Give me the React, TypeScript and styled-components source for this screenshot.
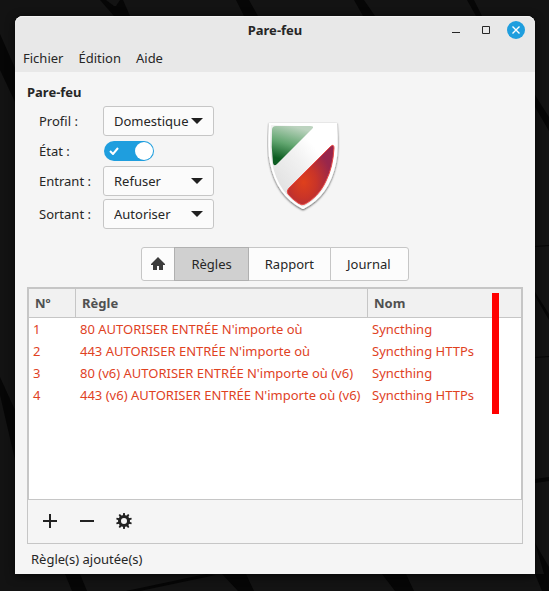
import React from 'react';
import styled, { createGlobalStyle, css } from 'styled-components';

const Global = createGlobalStyle`
  *, *::before, *::after { box-sizing: border-box; }
  html, body { margin: 0; }
  body, button, select, input, table {
    font-family: "Noto Sans", "Open Sans", sans-serif;
    font-size: 13px;
    line-height: 20px;
    color: #262626;
  }
`;

const Desktop = styled.div`
  position: relative;
  min-height: 100vh;
  padding: 16px 14px 17px 15px;
  display: flex;
  background: #131313;
  overflow: hidden;
`;

const Wallpaper = styled.svg`
  position: absolute;
  inset: 0;
  width: 100%;
  height: 100%;
`;

const Window = styled.main`
  position: relative;
  flex: 1;
  min-width: 0;
  display: flex;
  flex-direction: column;
  background: #f5f5f5;
  border-radius: 8px 8px 0 0;
  box-shadow: 0 2px 10px rgba(0, 0, 0, 0.7);
`;

const TitleBar = styled.header`
  display: grid;
  grid-template-columns: 1fr auto 1fr;
  align-items: center;
  height: 28px;
  padding: 0 10px;
  background: #e8e8e8;
  border-radius: 8px 8px 0 0;
  box-shadow: inset 0 1px #f4f4f4;
`;

const Title = styled.h1`
  grid-column: 2;
  margin: 0;
  font-size: 13px;
  font-weight: 700;
`;

const WindowControls = styled.div`
  display: flex;
  justify-content: flex-end;
  gap: 12px;
`;

const WindowButton = styled.button<{ $accent?: boolean }>`
  display: grid;
  place-items: center;
  width: 18px;
  height: 18px;
  padding: 0;
  border: 0;
  border-radius: 50%;
  background: ${(p) => (p.$accent ? '#1f9ede' : 'transparent')};
  color: ${(p) => (p.$accent ? '#fff' : '#262626')};
`;

const MenuBar = styled.nav`
  display: flex;
  gap: 15px;
  height: 28px;
  padding: 0 8px;
  background: #e8e8e8;
`;

const MenuItem = styled.button`
  padding: 0;
  border: 0;
  background: none;
`;

const Content = styled.div`
  flex: 1;
  display: flex;
  flex-direction: column;
  padding: 10px 12px 5px;
`;

const Overview = styled.section`
  display: flex;
  align-items: flex-start;
`;

const Heading = styled.h2`
  margin: 0 0 4px;
  font-size: 13px;
  font-weight: 700;
`;

const Form = styled.div`
  display: grid;
  grid-template-columns: 64px 111px;
  grid-template-rows: 30px 24px 30px 30px;
  row-gap: 3px;
  align-items: center;
  padding-left: 12px;
`;

const Label = styled.label`
  white-space: nowrap;
`;

const SelectBox = styled.div`
  display: grid;
  align-items: center;
  height: 30px;
`;

const Select = styled.select`
  grid-area: 1 / 1;
  appearance: none;
  width: 100%;
  height: 100%;
  padding: 0 16px 0 10px;
  border: 1px solid #c6c6c6;
  border-radius: 3px;
  background: #fbfbfb;
`;

const Arrow = styled.svg`
  grid-area: 1 / 1;
  justify-self: end;
  margin-right: 11px;
  pointer-events: none;
`;

const SwitchTrack = styled.span`
  display: grid;
  align-items: center;
  width: 50px;
  height: 20px;
  margin-left: 1px;
  border-radius: 10px;
  background: #1f9ede;
`;

const SwitchInput = styled.input`
  grid-area: 1 / 1;
  appearance: none;
  width: 18px;
  height: 18px;
  margin: 0 1px;
  border-radius: 50%;
  background: #fff;
  justify-self: start;
  &:checked { justify-self: end; }
`;

const SwitchCheck = styled.svg`
  grid-area: 1 / 1;
  margin-left: 5px;
`;

const ShieldBox = styled.div`
  display: flex;
  padding: 39px 0 0 53px;
`;

const Tabs = styled.div`
  display: flex;
  align-self: center;
  height: 34px;
  margin-top: 18px;
`;

const Tab = styled.button<{ $active?: boolean }>`
  display: flex;
  align-items: center;
  padding: 0 16px;
  border: 1px solid #c6c6c6;
  background: #fcfcfc;
  & + & { margin-left: -1px; }
  &:first-child { padding: 0 8px; border-radius: 3px 0 0 3px; }
  &:last-child { padding: 0 17px 0 16px; border-radius: 0 3px 3px 0; }
  ${(p) => p.$active && css`z-index: 1; background: #d0d0d0; border-color: #b0b0b0;`}
`;

const Panel = styled.section`
  position: relative;
  flex: 1;
  display: flex;
  flex-direction: column;
  margin-top: 6px;
  border: 1px solid #c6c6c6;
`;

const List = styled.div`
  flex: 1;
  border: 1px solid #c6c6c6;
  background: #fff;
`;

const Table = styled.table`
  width: 100%;
  table-layout: fixed;
  border-spacing: 0;
`;

const HeadCell = styled.th<{ $width?: number }>`
  width: ${(p) => (p.$width ? `${p.$width}px` : 'auto')};
  height: 29px;
  padding: 0 6px;
  border-bottom: 1px solid #c6c6c6;
  background: #f1f1f1;
  color: #505050;
  text-align: left;
  &:not(:last-child) { border-right: 1px solid #c6c6c6; }
`;

const Cell = styled.td`
  height: 22px;
  padding: 0 4px;
  color: #e0421f;
  white-space: nowrap;
`;

const Marker = styled.span`
  position: absolute;
  top: 5px;
  right: 23px;
  width: 7px;
  height: 121px;
  background: #f00;
`;

const Toolbar = styled.div`
  display: flex;
  align-items: flex-start;
  gap: 21px;
  height: 43px;
  padding: 13px 14px 0;
`;

const ToolButton = styled.button`
  display: grid;
  padding: 0;
  border: 0;
  background: none;
`;

const Status = styled.footer`
  padding: 5px 4px 0;
`;

const rules = [
  ['1', "80 AUTORISER ENTRÉE N'importe où", 'Syncthing'],
  ['2', "443 AUTORISER ENTRÉE N'importe où", 'Syncthing HTTPs'],
  ['3', "80 (v6) AUTORISER ENTRÉE N'importe où (v6)", 'Syncthing'],
  ['4', "443 (v6) AUTORISER ENTRÉE N'importe où (v6)", 'Syncthing HTTPs'],
];

function Dropdown({ id, label, options }: { id: string; label: string; options: string[] }) {
  return (
    <>
      <Label htmlFor={id}>{label}</Label>
      <SelectBox>
        <Select id={id}>
          {options.map((o) => <option key={o}>{o}</option>)}
        </Select>
        <Arrow width="12" height="6" viewBox="0 0 12 6"><path d="M0 0h12L6 6z" fill="#202020" /></Arrow>
      </SelectBox>
    </>
  );
}

const shieldPath = 'M3 3H69Q71 28 68 42C64 62 54 78 36 87C18 78 8 62 4 42Q1 28 3 3Z';

function Shield() {
  return (
    <svg width="74" height="94" viewBox="0 0 74 94" role="img" aria-label="Pare-feu">
      <defs>
        <linearGradient id="body" x1="0" y1="1" x2="1" y2="0">
          <stop offset="0.2" stopColor="#e2e2e2" />
          <stop offset="0.5" stopColor="#f1f1f1" />
          <stop offset="0.7" stopColor="#fff" />
        </linearGradient>
        <linearGradient id="green" x1="0.5" y1="0" x2="0.2" y2="1">
          <stop offset="0" stopColor="#bcd3bf" />
          <stop offset="0.45" stopColor="#62a670" />
          <stop offset="0.85" stopColor="#0d5d22" />
        </linearGradient>
        <radialGradient id="red" cx="0.35" cy="0.62" r="0.6">
          <stop offset="0" stopColor="#df401c" />
          <stop offset="0.45" stopColor="#c93428" />
          <stop offset="1" stopColor="#98264b" />
        </radialGradient>
        <filter id="shade" x="-20%" y="-20%" width="140%" height="140%">
          <feDropShadow dx="0" dy="1" stdDeviation="1" floodColor="#000" floodOpacity="0.7" />
        </filter>
      </defs>
      <path d={shieldPath} fill="url(#body)" stroke="#fff" strokeWidth="2" filter="url(#shade)" />
      <path d="M9 5H43Q48 5 45 8L10 43Q7 46 6 42Q4 26 5 9Q5 5 9 5Z" fill="url(#green)" />
      <path d="M63 26Q67 22 67 27Q66 46 59 60C54 71 46 79 38 83Q35 85 31 82Q25 78 21 73Q19 70 22 67Z" fill="url(#red)" stroke="#e84a45" strokeWidth="1" />
    </svg>
  );
}

const gearTeeth = [0, 36, 72, 108, 144, 180, 216, 252, 288, 324];

export default function App() {
  return (
    <Desktop>
      <Global />
      <Wallpaper viewBox="0 0 549 591" preserveAspectRatio="none" aria-hidden="true">
        <g fill="#060606">
          <path d="M100 0h6l8 6h2l4-6h3l7 16h-16z" />
          <path d="M236 0h13l9 16h-14zM354 0h10l11 16h-12zM467 0h7l8 16h-6z" />
          <path d="M0 34L15 68V102L0 70zM0 377l15 33v50L0 395z" />
          <path d="M535 95l14 22v14l-14-24zM535 292l14 22v6l-14-24zM535 543l14 24v24z" />
          <path d="M535 479l14-2v4l-14 2zM535 246l14-1v1l-14 1zM535 357l14-1v1l-14 1z" />
          <path d="M65 574h15l7 17H72zM222 574h24l8 17h-16zM382 574h24l8 17h-19zM535 574h10l4 17h-7z" />
          <path d="M206 574l-80 17h14l76-16z" />
        </g>
      </Wallpaper>
      <Window>
        <TitleBar>
          <Title>Pare-feu</Title>
          <WindowControls>
            <WindowButton aria-label="Réduire">
              <svg width="10" height="10"><path d="M1 7.5h8" stroke="currentColor" /></svg>
            </WindowButton>
            <WindowButton aria-label="Agrandir">
              <svg width="8" height="8"><path d="M.5.5h7v7h-7z" fill="none" stroke="currentColor" /></svg>
            </WindowButton>
            <WindowButton $accent aria-label="Fermer">
              <svg width="8" height="8"><path d="M.5.5l7 7m0-7l-7 7" stroke="currentColor" strokeWidth="1.4" /></svg>
            </WindowButton>
          </WindowControls>
        </TitleBar>
        <MenuBar>
          <MenuItem>Fichier</MenuItem>
          <MenuItem>Édition</MenuItem>
          <MenuItem>Aide</MenuItem>
        </MenuBar>
        <Content>
          <Overview>
            <div>
              <Heading>Pare-feu</Heading>
              <Form>
                <Dropdown id="profil" label="Profil :" options={['Domestique', 'Public', 'Bureau']} />
                <Label htmlFor="etat">État :</Label>
                <SwitchTrack>
                  <SwitchCheck width="10" height="8" viewBox="0 0 10 8">
                    <path d="M1 4l3 3 5-6" fill="none" stroke="#fff" strokeWidth="2" />
                  </SwitchCheck>
                  <SwitchInput id="etat" type="checkbox" role="switch" defaultChecked />
                </SwitchTrack>
                <Dropdown id="entrant" label="Entrant :" options={['Refuser', 'Rejeter', 'Autoriser']} />
                <Dropdown id="sortant" label="Sortant :" options={['Autoriser', 'Rejeter', 'Refuser']} />
              </Form>
            </div>
            <ShieldBox><Shield /></ShieldBox>
          </Overview>
          <Tabs role="tablist">
            <Tab role="tab" aria-label="Accueil">
              <svg width="16" height="16" viewBox="0 0 16 16">
                <path d="M8 1L1 8v1h2v5h4v-4h2v4h4V9h2V8L8 1z" fill="#3c3c3c" />
              </svg>
            </Tab>
            <Tab role="tab" $active aria-selected="true">Règles</Tab>
            <Tab role="tab">Rapport</Tab>
            <Tab role="tab">Journal</Tab>
          </Tabs>
          <Panel>
            <List>
              <Table>
                <thead>
                  <tr>
                    <HeadCell $width={47}>Nº</HeadCell>
                    <HeadCell $width={292}>Règle</HeadCell>
                    <HeadCell>Nom</HeadCell>
                  </tr>
                </thead>
                <tbody>
                  {rules.map((r) => (
                    <tr key={r[0]}>{r.map((c, i) => <Cell key={i}>{c}</Cell>)}</tr>
                  ))}
                </tbody>
              </Table>
            </List>
            <Toolbar>
              <ToolButton aria-label="Ajouter">
                <svg width="16" height="16"><path d="M1 8h14M8 1v14" stroke="#222" strokeWidth="2" /></svg>
              </ToolButton>
              <ToolButton aria-label="Supprimer">
                <svg width="16" height="16"><path d="M1 8h14" stroke="#222" strokeWidth="2" /></svg>
              </ToolButton>
              <ToolButton aria-label="Modifier">
                <svg width="16" height="16" viewBox="-8 -8 16 16">
                  <circle r="4.5" fill="none" stroke="#222" strokeWidth="3" />
                  {gearTeeth.map((a) => (
                    <path key={a} d="M-1.2-5L-.8-8H.8L1.2-5z" fill="#222" transform={`rotate(${a})`} />
                  ))}
                </svg>
              </ToolButton>
            </Toolbar>
            <Marker />
          </Panel>
          <Status>Règle(s) ajoutée(s)</Status>
        </Content>
      </Window>
    </Desktop>
  );
}
